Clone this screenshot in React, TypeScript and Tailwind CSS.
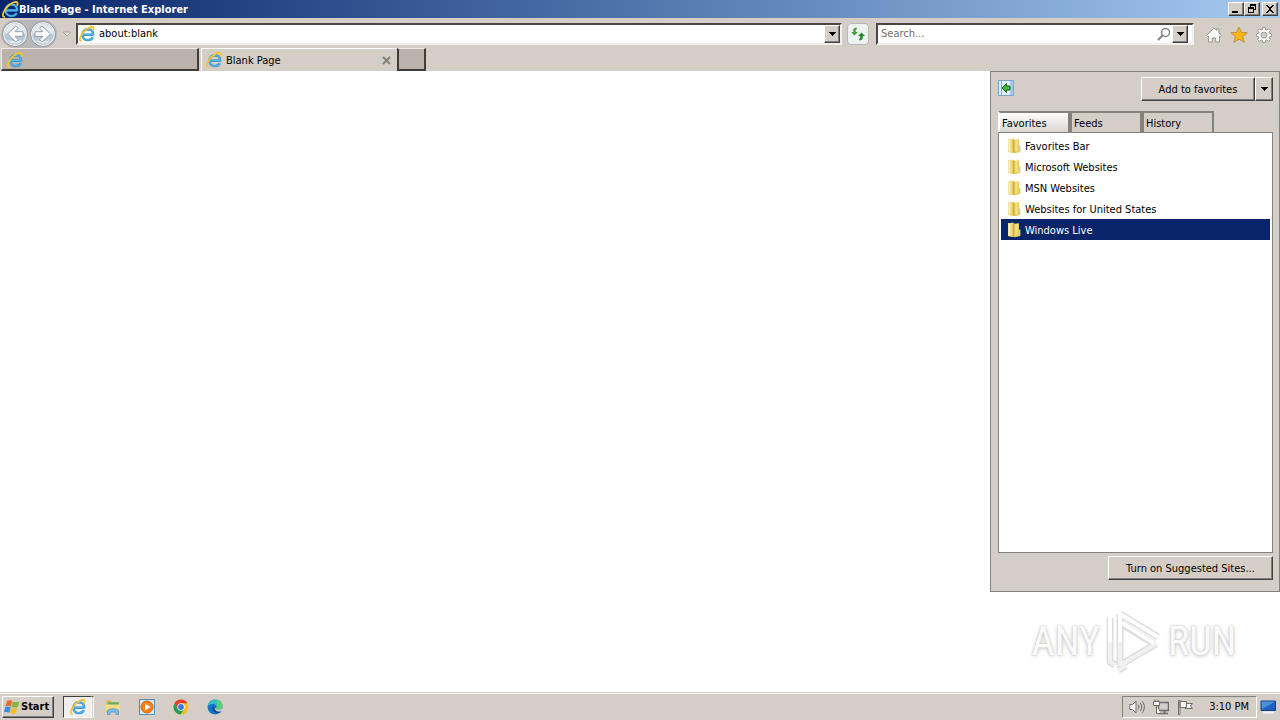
import type { ReactNode } from 'react';

const raised =
  'border border-t-white border-l-white border-r-[#404040] border-b-[#404040] shadow-[inset_-1px_-1px_0_#808080] bg-[#d5cec7]';

function IeIcon({ className = 'size-4' }: { className?: string }) {
  return (
    <svg viewBox="0 0 16 16" className={className} aria-hidden="true">
      <path
        d="M4 8.800h10.200M14.200 9.300c.3-3.900-2-6.100-5.300-6.100-3.200 0-5.500 2.300-5.500 5.500s2.300 5.400 5.500 5.400c2.300 0 4.100-1 4.900-2.800"
        fill="none"
        stroke="#2580c8"
        strokeWidth="2.400"
      />
      <path
        d="M4 8.800h10.200M14.200 9.300c.3-3.900-2-6.100-5.300-6.100-3.200 0-5.500 2.300-5.500 5.500s2.300 5.400 5.500 5.400c2.300 0 4.100-1 4.900-2.800"
        fill="none"
        stroke="#52b6ee"
        strokeWidth="1.500"
      />
      <path
        d="M2.200 15C.2 14.900.4 11.700 2.800 8.200 5.500 4 10 1 12.900.9c1.800 0 2.200 1.300 1.500 3"
        fill="none"
        stroke="#f6c624"
        strokeWidth="1.700"
        strokeLinecap="round"
      />
    </svg>
  );
}

function Caret() {
  return (
    <svg viewBox="0 0 8 4" className="h-1 w-2" aria-hidden="true" shapeRendering="crispEdges">
      <path d="M0 0h8L4 4Z" fill="#000" />
    </svg>
  );
}

function CaptionButton({ label, children }: { label: string; children: ReactNode }) {
  return (
    <button aria-label={label} className={`flex h-3.5 w-4 items-center justify-center ${raised}`}>
      <svg viewBox="0 0 12 12" className="size-3 shrink-0" shapeRendering="crispEdges" aria-hidden="true">
        {children}
      </svg>
    </button>
  );
}

function NavButton({ label, back }: { label: string; back?: boolean }) {
  const arrow = back
    ? 'M22 11.700v4.600h-8l3.300 3.500-2.300 2.300L6.500 14 15 5.900l2.300 2.300-3.300 3.500Z'
    : 'M6 11.700v4.600h8l-3.300 3.500 2.300 2.300L21.500 14 13 5.900l-2.300 2.300 3.300 3.500Z';
  return (
    <button aria-label={label} className="size-7">
      <svg viewBox="0 0 28 28" className="size-7" aria-hidden="true">
        <circle cx="14" cy="14" r="12.500" fill="#f3f5f7" stroke="#8e9299" strokeWidth="1" />
        <circle cx="14" cy="14" r="10.800" fill="#b9c8d6" />
        <path d="M3.500 13.500a10.500 10 0 0 1 21 0c-6 2-15 2-21 0Z" fill="#e3e9ee" />
        <path d="M6 20c4 4.500 12 4.500 16 0-3 1.500-13 1.500-16 0Z" fill="#e6eef5" />
        <path d={arrow} fill="#fff" stroke="#8795a4" strokeWidth=".9" strokeLinejoin="round" />
      </svg>
    </button>
  );
}

function TitleBar() {
  return (
    <header className="flex h-[18px] items-center bg-linear-to-r from-[#0a246a] to-[#a6caf0] px-0.5">
      <IeIcon className="size-[17px]" />
      <h1 className="flex-1 pt-px text-[11px] font-bold text-white">Blank Page - Internet Explorer</h1>
      <CaptionButton label="Minimize">
        <path d="M2 8h6v2H2Z" />
      </CaptionButton>
      <CaptionButton label="Restore">
        <path d="M4 1h6v6H8V6h1V3H5v1H4ZM2 4h6v6H2Zm1 2v3h4V6Z" fillRule="evenodd" />
      </CaptionButton>
      <div className="w-0.5" />
      <CaptionButton label="Close">
        <path d="M2 2h2v1h1v1h2V3h1V2h2v1H9v1H8v1H7v2h1v1h1v1h1v1H8V9H7V8H5v1H4v1H2V9h1V8h1V7h1V5H4V4H3V3H2Z" />
      </CaptionButton>
    </header>
  );
}

const field =
  'flex h-[22px] items-center border-2 border-t-[#4c4644] border-l-[#4c4644] border-r-[#f2efec] border-b-[#f2efec] bg-white';

function Toolbar() {
  return (
    <div className="flex h-[30px] items-center pl-px pr-2 pt-px">
      <div className="flex rounded-full bg-[#b9b7b8]">
        <NavButton label="Back" back />
        <NavButton label="Forward" />
      </div>
      <button aria-label="Recent pages" className="flex w-[19px] justify-center">
        <svg viewBox="0 0 10 6" className="h-1.5 w-2.5" aria-hidden="true">
          <path d="M1 1h8L5 5Z" fill="#e6e2de" stroke="#a9a39d" />
        </svg>
      </button>
      <div className={`flex-1 ${field}`}>
        <span className="pl-px">
          <IeIcon />
        </span>
        <input
          aria-label="Address"
          defaultValue="about:blank"
          className="min-w-0 flex-1 bg-transparent pl-1 outline-none"
        />
        <button aria-label="Show address history" className={`flex h-[18px] w-4 items-center justify-center ${raised}`}>
          <Caret />
        </button>
      </div>
      <button
        aria-label="Refresh"
        className="ml-[5px] mr-[7px] flex h-[22px] w-[22px] items-center justify-center rounded-sm border border-[#b4b8ba] bg-[#edf2f1]"
      >
        <svg viewBox="0 0 16 16" className="size-4 shrink-0" aria-hidden="true">
          <path d="M6.500 1.500 7 3.500H5.800V6H8L4.500 9.500 1 6h2.300V3.500c.4-1.200 1.700-2 3.200-2Z" fill="#3fa53c" />
          <path d="m9.500 14.500-.5-2h1.200V10H8l3.500-3.500L15 10h-2.300v2.500c-.4 1.200-1.700 2-3.200 2Z" fill="#23852a" />
        </svg>
      </button>
      <div className={`w-[318px] ${field}`}>
        <input
          aria-label="Search"
          placeholder="Search..."
          className="min-w-0 flex-1 bg-transparent pl-[3px] outline-none placeholder:text-[#6d6d6d]"
        />
        <button aria-label="Search the web" className="mr-px">
          <svg viewBox="0 0 14 14" className="size-3.5" aria-hidden="true">
            <circle cx="8.500" cy="5.500" r="4" fill="#fff" stroke="#858585" strokeWidth="1.500" />
            <path d="M5.500 8.500 1.500 12.500" stroke="#858585" strokeWidth="2" strokeLinecap="round" />
          </svg>
        </button>
        <button aria-label="Search options" className={`mr-1 flex h-[18px] w-4 items-center justify-center ${raised}`}>
          <Caret />
        </button>
      </div>
      <div className="ml-3 flex gap-2 pt-0.5">
        <button aria-label="Home">
          <svg viewBox="0 0 16 16" className="size-4" aria-hidden="true">
            <path
              d="m8 .9 2.500 2.500V2h2.500v4l2.500 2.500-1.200 1.200-.8-.7v6H9.700v-4H6.300v4H2.500V9l-.8.7L.5 8.500Z"
              fill="#fcfcfc"
              stroke="#8e8b88"
              strokeWidth=".9"
            />
          </svg>
        </button>
        <button aria-label="Favorites">
          <svg viewBox="0 0 18 18" className="size-[18px]" aria-hidden="true">
            <path
              d="m9 1 2.300 5.300 5.900.5-4.500 3.800 1.400 5.700L9 13.200l-5.100 3.100 1.400-5.700L.8 6.800l5.900-.5Z"
              fill="#fdb515"
              stroke="#b98a3c"
              strokeWidth=".9"
            />
          </svg>
        </button>
        <button aria-label="Tools">
          <svg viewBox="0 0 16 16" className="size-4" aria-hidden="true">
            <path
              d="M6.700.6h2.600l.4 2 1.100.5 1.800-1.200 1.700 1.700-1.200 1.800.5 1.100 2 .4v2.400l-2 .4-.5 1.100 1.200 1.800-1.700 1.700-1.800-1.200-1.100.5-.4 2H6.700l-.4-2-1.100-.5-1.800 1.200-1.700-1.700 1.200-1.800-.5-1.100-2-.4V6.900l2-.4.5-1.100-1.200-1.800 1.700-1.700 1.800 1.200 1.100-.5ZM8 5.200a2.900 2.900 0 1 0 0 5.800 2.900 2.900 0 0 0 0-5.800Z"
              fill="#fcfcfc"
              fillRule="evenodd"
              stroke="#8e8b88"
              strokeWidth=".9"
            />
          </svg>
        </button>
      </div>
    </div>
  );
}

const idleTab = 'border-t-[#efebe8] border-r-2 border-b-2 border-r-[#403c3a] border-b-[#403c3a] bg-[#bbb3ab]';

function TabStrip() {
  return (
    <nav aria-label="Tabs" className="flex h-[23px] items-stretch pl-px">
      <button
        aria-label="Tab 1"
        className={`flex w-[198px] items-center border-l border-t border-l-[#efebe8] pl-[5px] pt-px ${idleTab}`}
      >
        <IeIcon />
      </button>
      <div className="ml-0.5 flex w-[196px] items-center border-l border-t border-white pl-1">
        <IeIcon />
        <span className="flex-1 pl-1 pt-px">Blank Page</span>
        <button aria-label="Close tab" className="mr-1.5">
          <svg viewBox="0 0 9 9" className="size-[9px]" aria-hidden="true">
            <path d="m1 1 7 7M8 1 1 8" stroke="#85807c" strokeWidth="2" />
          </svg>
        </button>
      </div>
      <button aria-label="New tab" className={`w-[29px] border-l-2 border-t border-l-[#403c3a] ${idleTab}`} />
    </nav>
  );
}

function FolderIcon() {
  return (
    <svg viewBox="0 0 14 16" className="h-4 w-3.5" aria-hidden="true">
      <path d="M1 1.200 6 .8l1.500 1 4.500-.6V13l1.200-.5v1.500L8 15.200 1 14Z" fill="#e9cf63" />
      <path d="M1 1.200 5.500.8V14.600L1 14Z" fill="#f1dc85" />
      <path d="M1.500 1.500h1.700v12l-1.700-.3Z" fill="#f9efbb" />
      <path d="M5.700 1.300 7.500 2v13l-1.800-.4Z" fill="#d3b13c" />
      <path d="M8.300 2h2v11l-2 .5Z" fill="#f5e28c" />
      <path d="M12 7.500h1.400V13l-1.400.7Z" fill="#c3d39a" />
    </svg>
  );
}

const favorites = [
  'Favorites Bar',
  'Microsoft Websites',
  'MSN Websites',
  'Websites for United States',
  'Windows Live',
];

const panelTab = 'w-[72px] border-2 border-b-0 border-[#85817d] pl-0.5 pt-0.5 text-left';

function FavoritesCenter() {
  return (
    <aside
      aria-label="Favorites Center"
      className="flex flex-1 flex-col border border-[#85817d] bg-[#d5cec7] pb-[11px] pl-[7px] pr-1.5 pt-[5px]"
    >
      <div className="flex items-start">
        <button aria-label="Pin the Favorites Center" className="mt-[3px]">
          <svg viewBox="0 0 16 16" className="size-4" aria-hidden="true">
            <path d="M.5.5h15v15H.5Z" fill="#e3eefb" stroke="#7fa3d0" />
            <path d="M12 1h3v14h-3Z" fill="#a9c8ee" />
            <path d="M3.500 1v14" stroke="#7fa9da" />
            <path d="M4 8 8.500 3.500V6H12v4H8.500v2.500Z" fill="#43bd37" stroke="#176316" />
          </svg>
        </button>
        <button className={`ml-auto h-6 w-[114px] pt-0.5 ${raised}`}>Add to favorites</button>
        <button aria-label="More favorites options" className={`flex h-6 w-[18px] items-center justify-center ${raised}`}>
          <Caret />
        </button>
      </div>
      <div role="tablist" className="mt-2.5 flex h-[21px]">
        <button
          role="tab"
          aria-selected="true"
          className={`border-l-white bg-linear-to-b from-white to-[#d9d4ce] ${panelTab}`}
        >
          Favorites
        </button>
        <button role="tab" aria-selected="false" className={panelTab}>
          Feeds
        </button>
        <button role="tab" aria-selected="false" className={panelTab}>
          History
        </button>
      </div>
      <ul className="flex-1 border border-[#85817d] bg-white px-0.5 pt-0.5">
        {favorites.map((name) => (
          <li key={name}>
            <a
              href="#"
              className={
                name === 'Windows Live'
                  ? 'flex h-[21px] items-center gap-1 bg-[#0a246a] pl-1.5 text-white'
                  : 'flex h-[21px] items-center gap-1 pl-1.5'
              }
            >
              <FolderIcon />
              <span className="pt-0.5">{name}</span>
            </a>
          </li>
        ))}
      </ul>
      <button className={`mt-[3px] h-6 w-[165px] self-end pt-0.5 ${raised}`}>Turn on Suggested Sites...</button>
    </aside>
  );
}

function Watermark() {
  const word =
    "font-['Roboto_Condensed','Roboto',sans-serif] text-[40px] leading-none text-[#fafafa] [text-shadow:0_0_2px_#c0c0c0,0_1px_4px_#c8c8c8]";
  return (
    <div className="flex h-[100px] items-center justify-center gap-1 pr-0.5">
      <span className={word}>ANY</span>
      <svg viewBox="0 0 60 64" className="h-16 w-[60px]" fill="none" strokeLinejoin="round" aria-hidden="true">
        <path d="M6 8v44l5 3M16 4v51M16 4l38 23M16 13l34 21M16 55l36-21M14 60l8-4" stroke="#dedede" strokeWidth="7" />
        <path d="M6 8v44l5 3M16 4v51M16 55l36-21M14 60l8-4" stroke="#f1f1f1" strokeWidth="4" />
        <path d="M6 32V8M16 32V4l38 23M18 13l32 20" stroke="#fff" strokeWidth="4" />
      </svg>
      <span className={word}>RUN</span>
    </div>
  );
}

function TaskButton({ label, children }: { label: string; children: ReactNode }) {
  return (
    <button aria-label={label} className="flex w-[34px] justify-center">
      <svg viewBox="0 0 16 16" className="size-4" aria-hidden="true">
        {children}
      </svg>
    </button>
  );
}

function TrayButton({ label, children }: { label: string; children: ReactNode }) {
  return (
    <button aria-label={label} className="flex w-6 justify-center">
      <svg viewBox="0 0 16 16" className="size-4" fill="#f5f5f5" stroke="#6e6a67" aria-hidden="true">
        {children}
      </svg>
    </button>
  );
}

function Taskbar() {
  return (
    <footer className="flex h-7 items-center border-t border-[#d5cec7] bg-[#d5cec7] pl-0.5 pr-1 shadow-[inset_0_1px_0_#fff]">
      <button className={`flex h-[22px] w-[52px] items-center pl-px text-[11px] font-bold ${raised}`}>
        <svg viewBox="0 0 16 16" className="mr-px size-4 shrink-0" aria-hidden="true">
          <path d="M3 2C5 .9 6.700 1 8.200 2L6.900 7.500C5 6.500 3.500 6.500 1.500 7.200Z" fill="#ee6630" />
          <path d="M8.900 2.500c1.900 1 3.800 1.100 6.600.1l-1.700 5.400c-2.200.9-4.200.8-6.200-.2Z" fill="#83b83b" />
          <path d="M1.300 8c1.900-.8 3.600-.7 5.400.2L5.300 13.700C3.500 12.800 1.900 12.600-.1 13.400Z" fill="#3d8fdb" />
          <path d="M7.400 8.700c2 1 3.900 1.100 6.200.2L12 14.300c-2.200.9-4.200.8-6-.2Z" fill="#f7bd25" />
        </svg>
        Start
      </button>
      <button
        aria-label="Internet Explorer"
        className="ml-[9px] flex h-[22px] w-[29px] items-center justify-center border border-b-white border-l-[#404040] border-r-white border-t-[#404040] bg-[#f1efed]"
      >
        <IeIcon />
      </button>
      <div className="mr-0.5 h-[22px] w-0.5 border-r border-t border-r-white border-t-[#404040]" />
      <TaskButton label="Windows Explorer">
        <path d="M1 3 2 1.500h4L7 3h7v10H1Z" fill="#d9b64c" />
        <path d="M3 3.500h10.500v3H3Z" fill="#57ad65" />
        <path d="M1 5.500h14V12H1Z" fill="#f5dd85" />
        <path d="M2.500 15.500V12c0-3 11-3 11 0v3.500H11V13H5v2.500Z" fill="#7fc0e8" stroke="#3f88bd" strokeWidth=".6" />
      </TaskButton>
      <TaskButton label="Windows Media Player">
        <path d="M.5.5h15v15H.5Z" fill="#d7e9f7" stroke="#4b8dc4" />
        <circle cx="8" cy="8" r="6" fill="#f58216" stroke="#d86507" />
        <path d="m6 4.500 5.500 3.500L6 11.500Z" fill="#fff" />
      </TaskButton>
      <TaskButton label="Google Chrome">
        <circle cx="8" cy="8" r="7.500" fill="#fbc116" />
        <path d="M1.500 4.200A7.500 7.500 0 0 0 7.500 15.500L11.200 10 8 8 4.800 9.900Z" fill="#229c4f" />
        <path d="M1.500 4.200 4.800 9.900 8 4.300h6.500A7.500 7.500 0 0 0 1.500 4.200Z" fill="#e33b2e" />
        <circle cx="8" cy="8" r="3.700" fill="#fff" />
        <circle cx="8" cy="8" r="2.900" fill="#3979e6" />
      </TaskButton>
      <TaskButton label="Microsoft Edge">
        <circle cx="8" cy="8" r="7.500" fill="#1573c8" />
        <path
          d="M.6 7.500C1 3.300 4.200.5 8.300.5c4.200 0 7.200 2.900 7.200 6.300 0 2.500-2 4-4.300 4-2 0-2.500-.8-2-1.600C10.300 7 8.500 5 6 5 3.500 5 1.500 6 .6 7.500Z"
          fill="#35bfc4"
        />
        <path
          d="M8.300.5c4.200 0 7.200 2.900 7.200 6.300 0 2.500-2 4-4.300 4-2 0-2.500-.8-2-1.600C11 6.500 12 3 8.300.5Z"
          fill="#5fce71"
        />
        <path d="M6.200 7C4.500 9 5.500 13 9.500 14c2 .4 3.700-.2 5-1.700-3 1.200-6.300.3-7-2.300Z" fill="#0b3f83" />
        <path d="M9.200 9.200c-.5.800 0 1.600 2 1.600 1.500 0 2.700-.5 3.500-1.500l1 1.500-1.700 1.500c-3 .8-6-.3-6.300-2.800Z" fill="#d5cec7" />
      </TaskButton>
      <div className="ml-auto flex h-[22px] items-center border border-b-white border-l-[#85817d] border-r-white border-t-[#85817d] pl-0.5 pr-[7px]">
        <TrayButton label="Volume">
          <path d="M.8 5.500h2.700L7 2v12l-3.500-3.500H.8Z" />
          <path d="M9 5.500c1 1.500 1 3.500 0 5M11.200 3.800c2 2.500 2 6 0 8.400M13.300 2.200c2.700 3.500 2.700 8 0 11.600" fill="none" />
        </TrayButton>
        <TrayButton label="Network">
          <path d="M5.500 3.500h10v8h-10Z" fill="#d2cecb" strokeWidth="1.500" />
          <path d="M6 14.500h9M11.500 12v2" strokeWidth="1.500" />
          <path d="M.5 2.500h6v4h-6ZM2 .5v2M5 .5v2M3.500 6.500v8h4" />
        </TrayButton>
        <TrayButton label="Action Center">
          <path d="M9 4.500h6.500L13.500 7l2 2.500H8" />
          <path d="M1.500 1.500h1.500v14H1.500ZM3 2.500h6.500v6H3Z" />
        </TrayButton>
        <time className="pl-3">3:10 PM</time>
      </div>
      <button aria-label="Show desktop" className="ml-[3px]">
        <svg viewBox="0 0 16 14" className="h-3.5 w-4" aria-hidden="true">
          <path d="M1 1h14.500v9.500H1Z" fill="#1f62bd" stroke="#174481" />
          <path d="M1.500 1.500h14L2 9Z" fill="#4a91dc" />
          <path d="M3 12.500h11" stroke="#eef3f8" strokeWidth="2" />
        </svg>
      </button>
    </footer>
  );
}

export default function App() {
  return (
    <div className="flex min-h-screen flex-col bg-[#d5cec7] font-['Tahoma','DejaVu_Sans_Condensed',sans-serif] text-[11px] leading-4 text-black">
      <TitleBar />
      <Toolbar />
      <TabStrip />
      <main className="flex flex-1 justify-end bg-white">
        <div className="flex w-[290px] flex-col">
          <FavoritesCenter />
          <Watermark />
        </div>
      </main>
      <Taskbar />
    </div>
  );
}
